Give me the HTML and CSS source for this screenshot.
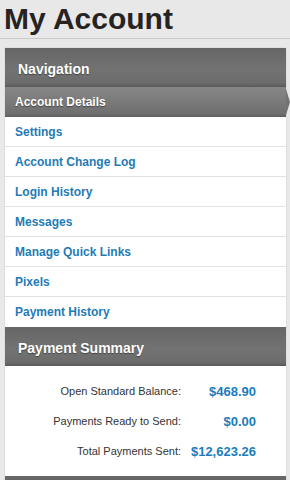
FILE: index.html
```html
<!DOCTYPE html>
<html lang="en">
<head>
    <meta charset="UTF-8">
    <meta name="viewport" content="width=device-width, initial-scale=1.0">
    <title>My Account</title>
    <link rel="stylesheet" href="styles.css">
</head>
<body>
    <h1 class="page-title">My Account</h1>

    <div class="panel">
        <div class="panel-head">Navigation</div>
        <div class="nav-current">Account Details</div>
        <ul class="nav-list">
            <li><a href="#">Settings</a></li>
            <li><a href="#">Account Change Log</a></li>
            <li><a href="#">Login History</a></li>
            <li><a href="#">Messages</a></li>
            <li><a href="#">Manage Quick Links</a></li>
            <li><a href="#">Pixels</a></li>
            <li><a href="#">Payment History</a></li>
        </ul>

        <div class="panel-head">Payment Summary</div>
        <div class="summary">
            <div class="summary-row">
                <span class="summary-label">Open Standard Balance:</span>
                <span class="summary-value">$468.90</span>
            </div>
            <div class="summary-row">
                <span class="summary-label">Payments Ready to Send:</span>
                <span class="summary-value">$0.00</span>
            </div>
            <div class="summary-row">
                <span class="summary-label">Total Payments Sent:</span>
                <span class="summary-value">$12,623.26</span>
            </div>
        </div>

        <!-- next section header, only its top edge is visible -->
        <div class="panel-head"></div>
    </div>
</body>
</html>
```

FILE: styles.css
```css
body {
    margin: 0;
    background: #e8e8e8;
    font-family: "Liberation Sans", Arial, sans-serif;
    overflow: hidden;
}
.page-title {
    margin: 0;
    height: 39px;
    padding: 2px 0 0 4px;
    box-sizing: border-box;
    font-size: 30px;
    line-height: 34px;
    font-weight: bold;
    color: #262322;
    border-bottom: 1px solid #c9c9c9;
}
.panel {
    margin: 9px 4px 0 5px;
    background: #fff;
    box-shadow: 0 0 1px #aaa;
}
.panel-head {
    height: 39px;
    box-sizing: border-box;
    padding: 2px 0 0 13px;
    line-height: 38px;
    font-size: 14px;
    font-weight: bold;
    color: #fff;
    text-shadow: 0 1px 1px #444;
    background: linear-gradient(#666 0%, #727272 55%, #6c6c6c 90%, #5a5a5a 100%);
}
.nav-current {
    position: relative;
    height: 30px;
    box-sizing: border-box;
    padding: 1px 0 0 10px;
    line-height: 29px;
    font-size: 12px;
    font-weight: bold;
    color: #fff;
    text-shadow: 0 1px 1px #444;
    background: linear-gradient(#868686 0%, #7a7a7a 50%, #6e6e6e 90%, #5e5e5e 100%);
}
.nav-current::after {
    content: "";
    position: absolute;
    right: -4px;
    top: 2px;
    border-left: 4px solid #737373;
    border-top: 13px solid transparent;
    border-bottom: 13px solid transparent;
}
.nav-list {
    list-style: none;
    margin: 0;
    padding: 0;
}
.nav-list li {
    height: 30px;
    box-sizing: border-box;
    border-bottom: 1px solid #e2e2e2;
}
.nav-list li:last-child {
    border-bottom: none;
}
.nav-list a {
    display: block;
    padding-top: 1px;
    line-height: 29px;
    padding-left: 10px;
    font-size: 12px;
    font-weight: bold;
    color: #1f7bb6;
    text-decoration: none;
}
.summary {
    padding: 10px 0 10px;
}
.summary-row {
    display: grid;
    grid-template-columns: 176px 75px;
    height: 30px;
    align-items: center;
}
.summary-label {
    text-align: right;
    font-size: 11px;
    color: #333;
}
.summary-value {
    text-align: right;
    font-size: 13px;
    font-weight: bold;
    color: #1a7dbd;
}
```
